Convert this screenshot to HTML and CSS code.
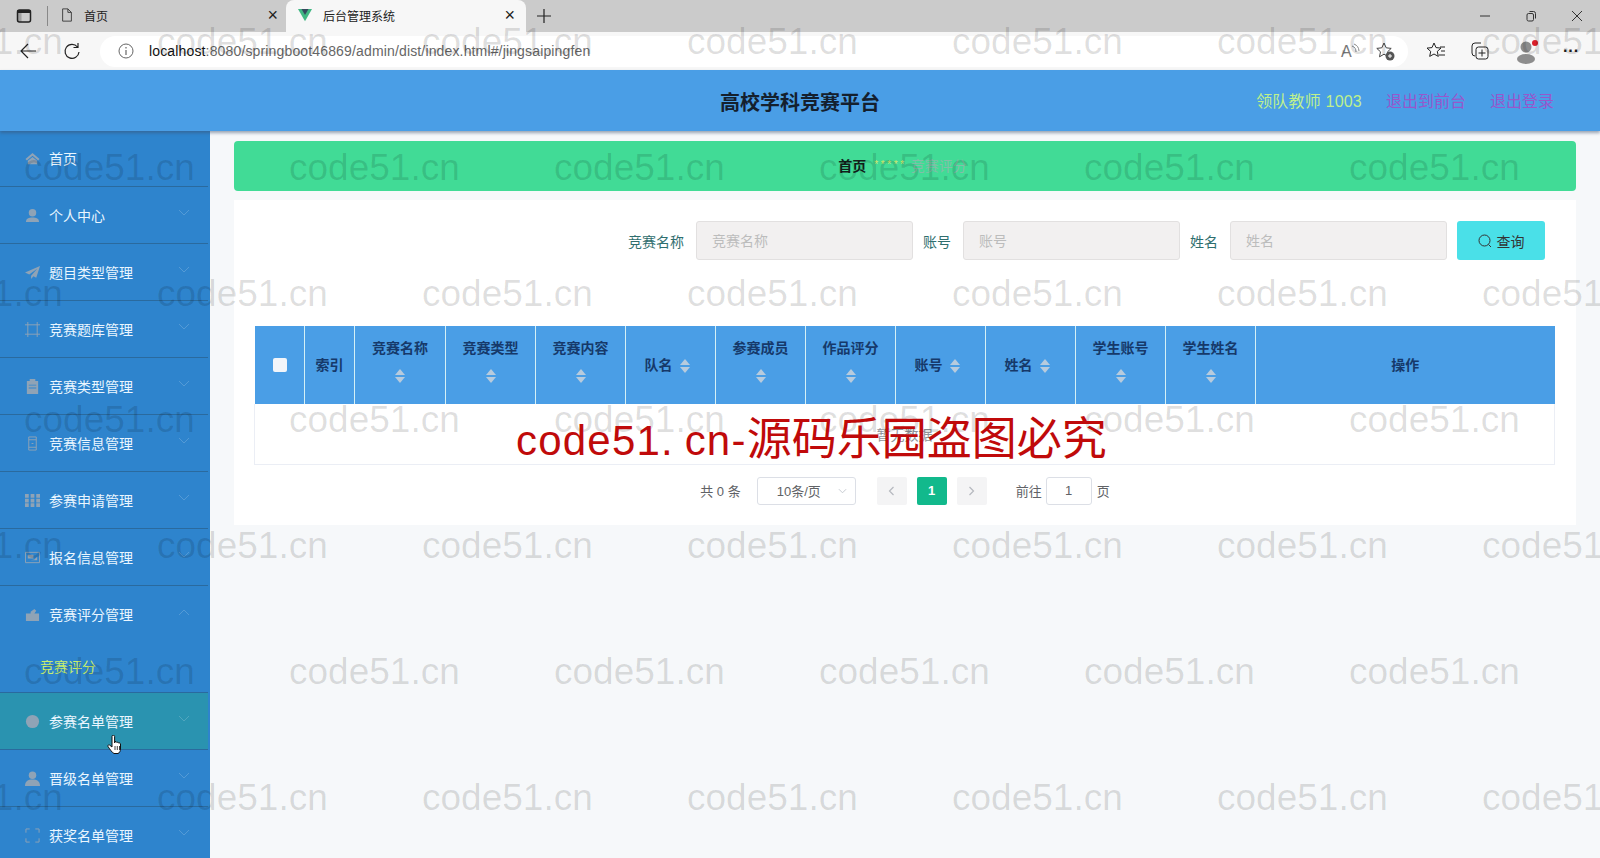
FILE: index.html
```html
<!DOCTYPE html>
<html lang="zh-CN">
  <head>
    <meta charset="UTF-8" />
    <title>后台管理系统</title>
    <link rel="stylesheet" href="styles.css">
  </head>
  <body>
    <div class="tabstrip">
      <svg class="tab-panel-icon" viewBox="0 0 16 16"><rect x="1.5" y="2" width="13" height="12" rx="2" fill="none" stroke="#222" stroke-width="1.5"/><rect x="1.5" y="2" width="13" height="3" fill="#222"/><rect x="1.5" y="2" width="4" height="12" fill="#222" opacity=".25"/></svg>
      <div class="tab-divider"></div>
      <div class="tab">
        <svg class="tab-icon" viewBox="0 0 14 16"><path d="M2 1h6l4 4v10H2z M8 1v4h4" fill="none" stroke="#333" stroke-width="1"/></svg>
        <span class="tab-title">首页</span>
        <span class="tab-close">×</span>
      </div>
      <div class="tab tab-active">
        <svg class="tab-icon" viewBox="0 0 16 14"><polygon points="0,0 16,0 8,14" fill="#41b883"/><polygon points="4,0 12,0 8,7" fill="#35495e"/></svg>
        <span class="tab-title">后台管理系统</span>
        <span class="tab-close">×</span>
      </div>
      <svg class="tab-plus" viewBox="0 0 14 14"><path d="M7 0v14M0 7h14" stroke="#222" stroke-width="1.2"/></svg>
      <div class="window-btns">
        <svg viewBox="0 0 12 12"><path d="M1 6h10" stroke="#333"/></svg>
        <svg viewBox="0 0 12 12"><rect x="2" y="3.5" width="6.5" height="7.5" rx="1.5" fill="none" stroke="#333"/><path d="M4.5 1.5h4a2 2 0 0 1 2 2v5" fill="none" stroke="#333"/></svg>
        <svg viewBox="0 0 12 12"><path d="M1 1l10 10M11 1L1 11" stroke="#333"/></svg>
      </div>
    </div>

    <div class="toolbar">
      <svg class="nav-icon" viewBox="0 0 18 18"><path d="M17 9H2M9 2L2 9l7 7" fill="none" stroke="#222" stroke-width="1.2"/></svg>
      <svg class="nav-icon" viewBox="0 0 18 18"><path d="M14.5 5A7 7 0 1 0 16 10M15 1v4.5h-4.5" fill="none" stroke="#222" stroke-width="1.2"/></svg>
      <div class="omnibox">
        <svg class="info-icon" viewBox="0 0 16 16"><circle cx="8" cy="8" r="7" fill="none" stroke="#666"/><path d="M8 7v5M8 4v1.5" stroke="#666" stroke-width="1.2"/></svg>
        <span class="url"><b>localhost</b>:8080/springboot46869/admin/dist/index.html#/jingsaipingfen</span>
        <svg class="omni-icon omni-read" viewBox="0 0 20 20"><text x="1" y="16" class="read-a">A</text><path d="M12 5a6 6 0 0 1 4 6M14 3a8 8 0 0 1 5 7" fill="none" stroke="#888"/></svg>
        <svg class="omni-icon" viewBox="0 0 20 20"><path d="M9 2l2.2 4.8 5 .6-3.7 3.4 1 5-4.5-2.6-4.5 2.6 1-5L1.8 7.400l5-.6z" fill="none" stroke="#444"/><circle cx="15" cy="15" r="4.500" fill="#555"/><path d="M15 13v4M13 15h4" stroke="#fff"/></svg>
      </div>
      <svg class="tool-icon tool-fav" viewBox="0 0 20 20"><path d="M8 2l2 4.600 5 .5-3.700 3.300 1 5L8 13l-4.300 2.400 1-5L1 7.100l5-.5z" fill="none" stroke="#222"/><path d="M14 6h5M15 10h4M13 14h6" stroke="#222"/></svg>
      <svg class="tool-icon tool-col" viewBox="0 0 20 20"><path d="M5 15a3 3 0 0 1-3-3V5a3 3 0 0 1 3-3h6" fill="none" stroke="#222"/><rect x="6" y="6" width="12" height="12" rx="2.500" fill="none" stroke="#222"/><path d="M12 8.500v7M8.500 12h7" stroke="#222"/></svg>
      <svg class="tool-avatar" viewBox="0 0 24 26"><circle cx="11" cy="9" r="5.500" fill="#8d8d8d"/><ellipse cx="11" cy="21" rx="9" ry="5" fill="#8d8d8d"/><circle cx="20" cy="5" r="3" fill="#d9202a"/></svg>
      <span class="tool-more">···</span>
    </div>

    <header class="topbar">
      <h1 class="site-title">高校学科竞赛平台</h1>
      <div class="top-links">
        <span class="top-user">领队教师 1003</span>
        <a class="top-link">退出到前台</a>
        <a class="top-link">退出登录</a>
      </div>
    </header>

    <div class="main">
      <aside class="sidebar">
        <div class="menu-item">
          <svg class="menu-icon" viewBox="0 0 16 16"><path d="M8 2L0.500 8.500 2 10l6-5 6 5 1.500-1.500zM3 10.500L8 6.500l5 4V14H3z"/></svg>
          <span>首页</span>
        </div>
        <div class="menu-item">
          <svg class="menu-icon" viewBox="0 0 16 16"><circle cx="8" cy="5" r="4"/><path d="M1 15c0-4 3-5 7-5s7 1 7 5z"/></svg>
          <span>个人中心</span>
          <svg class="chevron" viewBox="0 0 12 8"><path d="M1 1l5 5 5-5"/></svg>
        </div>
        <div class="menu-item">
          <svg class="menu-icon" viewBox="0 0 16 16"><path d="M16 1L0 8l4.500 2L13 4l-6.500 7.500V15l2.500-3 3 1.500z"/></svg>
          <span>题目类型管理</span>
          <svg class="chevron" viewBox="0 0 12 8"><path d="M1 1l5 5 5-5"/></svg>
        </div>
        <div class="menu-item">
          <svg class="menu-icon" viewBox="0 0 16 16"><path d="M3 0v16M13 0v16M0 3h16M0 13h16" fill="none" stroke="currentColor"/></svg>
          <span>竞赛题库管理</span>
          <svg class="chevron" viewBox="0 0 12 8"><path d="M1 1l5 5 5-5"/></svg>
        </div>
        <div class="menu-item">
          <svg class="menu-icon" viewBox="0 0 16 16"><path d="M2 2h3V0h6v2h3v14H2zM4 6v1h8V6zM4 9v1h8V9z" fill-rule="evenodd"/></svg>
          <span>竞赛类型管理</span>
          <svg class="chevron" viewBox="0 0 12 8"><path d="M1 1l5 5 5-5"/></svg>
        </div>
        <div class="menu-item">
          <svg class="menu-icon" viewBox="0 0 16 16"><path d="M4 1h8v14H4zM4 4h8M4 12h8M7 8h2" fill="none" stroke="currentColor"/></svg>
          <span>竞赛信息管理</span>
          <svg class="chevron" viewBox="0 0 12 8"><path d="M1 1l5 5 5-5"/></svg>
        </div>
        <div class="menu-item">
          <svg class="menu-icon" viewBox="0 0 16 16"><path d="M0 1h4v4H0zM6 1h4v4H6zM12 1h4v4h-4zM0 6h4v4H0zM6 6h4v4H6zM12 6h4v4h-4zM0 11h4v4H0zM6 11h4v4H6zM12 11h4v4h-4z"/></svg>
          <span>参赛申请管理</span>
          <svg class="chevron" viewBox="0 0 12 8"><path d="M1 1l5 5 5-5"/></svg>
        </div>
        <div class="menu-item">
          <svg class="menu-icon" viewBox="0 0 16 16"><path d="M.5 2.500h15v11H.5z" fill="none" stroke="currentColor"/><path d="M3 5h6v4H3zM10 10l3-3v4H6z"/></svg>
          <span>报名信息管理</span>
          <svg class="chevron" viewBox="0 0 12 8"><path d="M1 1l5 5 5-5"/></svg>
        </div>
        <div class="menu-item menu-open">
          <svg class="menu-icon" viewBox="0 0 16 16"><path d="M1 7h5V5l4-3 2 2-2 3h5v8H1z"/></svg>
          <span>竞赛评分管理</span>
          <svg class="chevron" viewBox="0 0 12 8"><path d="M1 7l5-5 5 5"/></svg>
        </div>
        <div class="submenu-item">竞赛评分</div>
        <div class="menu-item menu-hover">
          <svg class="menu-icon" viewBox="0 0 16 16"><circle cx="8" cy="8" r="7"/></svg>
          <span>参赛名单管理</span>
          <svg class="chevron" viewBox="0 0 12 8"><path d="M1 1l5 5 5-5"/></svg>
        </div>
        <div class="menu-item">
          <svg class="menu-icon" viewBox="0 0 16 16"><circle cx="8" cy="4.500" r="4"/><path d="M0 16c0-5 3-7 8-7s8 2 8 7z"/></svg>
          <span>晋级名单管理</span>
          <svg class="chevron" viewBox="0 0 12 8"><path d="M1 1l5 5 5-5"/></svg>
        </div>
        <div class="menu-item">
          <svg class="menu-icon" viewBox="0 0 16 16"><path d="M1 5V1h4M11 1h4v4M15 11v4h-4M5 15H1v-4" fill="none" stroke="currentColor"/></svg>
          <span>获奖名单管理</span>
          <svg class="chevron" viewBox="0 0 12 8"><path d="M1 1l5 5 5-5"/></svg>
        </div>
      </aside>

      <main class="content">
        <div class="breadcrumb">
          <span class="crumb-home">首页</span>
          <span class="crumb-sep">*****</span>
          <span class="crumb-current">竞赛评分</span>
        </div>

        <section class="panel">
          <form class="search-form">
            <label class="field"><span class="field-label">竞赛名称</span><input class="field-input" placeholder="竞赛名称" /></label>
            <label class="field"><span class="field-label">账号</span><input class="field-input" placeholder="账号" /></label>
            <label class="field"><span class="field-label">姓名</span><input class="field-input" placeholder="姓名" /></label>
            <button class="search-btn" type="button">
              <svg viewBox="0 0 14 14"><circle cx="6.500" cy="6.500" r="5.500" fill="none" stroke="#333"/><path d="M10.500 10.500l2.500 2.500" stroke="#333"/></svg>
              查询
            </button>
          </form>

          <table class="data-table">
            <colgroup>
              <col class="col-narrow" /><col class="col-narrow" />
              <col class="col-first" /><col class="col-wide" /><col class="col-wide" /><col class="col-wide" /><col class="col-wide" />
              <col class="col-wide" /><col class="col-wide" /><col class="col-wide" /><col class="col-wide" /><col class="col-wide" />
              <col />
            </colgroup>
            <thead>
              <tr>
                <th><span class="check"></span></th>
                <th>索引</th>
                <th>竞赛名称<span class="sort sort-block"></span></th>
                <th>竞赛类型<span class="sort sort-block"></span></th>
                <th>竞赛内容<span class="sort sort-block"></span></th>
                <th>队名<span class="sort"></span></th>
                <th>参赛成员<span class="sort sort-block"></span></th>
                <th>作品评分<span class="sort sort-block"></span></th>
                <th>账号<span class="sort"></span></th>
                <th>姓名<span class="sort"></span></th>
                <th>学生账号<span class="sort sort-block"></span></th>
                <th>学生姓名<span class="sort sort-block"></span></th>
                <th>操作</th>
              </tr>
            </thead>
            <tbody>
              <tr><td class="empty" colspan="13">暂无数据</td></tr>
            </tbody>
          </table>

          <div class="pager">
            <span class="pager-total">共 0 条</span>
            <div class="pager-size">10条/页<svg viewBox="0 0 10 6"><path d="M1 1l4 4 4-4" fill="none" stroke="#c0c4cc"/></svg></div>
            <span class="pager-btn"><svg viewBox="0 0 6 10"><path d="M5 1L1 5l4 4" fill="none" stroke="#b5b8be" stroke-width="1.200"/></svg></span>
            <span class="pager-num">1</span>
            <span class="pager-btn"><svg viewBox="0 0 6 10"><path d="M1 1l4 4-4 4" fill="none" stroke="#b5b8be" stroke-width="1.200"/></svg></span>
            <span class="pager-goto">前往</span>
            <span class="pager-input">1</span>
            <span class="pager-unit">页</span>
          </div>
        </section>
      </main>
    </div>

    <div class="watermarks">
      <div class="wm-row wm-odd"><span>code51.cn</span><span>code51.cn</span><span>code51.cn</span><span>code51.cn</span><span>code51.cn</span><span>code51.cn</span><span>code51.cn</span></div>
      <div class="wm-row wm-even"><span>code51.cn</span><span>code51.cn</span><span>code51.cn</span><span>code51.cn</span><span>code51.cn</span><span>code51.cn</span></div>
      <div class="wm-row wm-odd"><span>code51.cn</span><span>code51.cn</span><span>code51.cn</span><span>code51.cn</span><span>code51.cn</span><span>code51.cn</span><span>code51.cn</span></div>
      <div class="wm-row wm-even"><span>code51.cn</span><span>code51.cn</span><span>code51.cn</span><span>code51.cn</span><span>code51.cn</span><span>code51.cn</span></div>
      <div class="wm-row wm-odd"><span>code51.cn</span><span>code51.cn</span><span>code51.cn</span><span>code51.cn</span><span>code51.cn</span><span>code51.cn</span><span>code51.cn</span></div>
      <div class="wm-row wm-even"><span>code51.cn</span><span>code51.cn</span><span>code51.cn</span><span>code51.cn</span><span>code51.cn</span><span>code51.cn</span></div>
      <div class="wm-row wm-odd"><span>code51.cn</span><span>code51.cn</span><span>code51.cn</span><span>code51.cn</span><span>code51.cn</span><span>code51.cn</span><span>code51.cn</span></div>
    </div>

    <div class="red-mark"><span class="red-latin">code51<span class="red-dot">.</span>cn-</span>源码乐园盗图必究</div>

    <svg class="hand-cursor" viewBox="0 0 16 20"><path d="M5 1.500a1.300 1.300 0 0 1 2.600 0V8l.4-1.500c1 0 1.600.3 1.800 1 .8-.4 1.500-.2 1.800.5.800-.3 1.700 0 1.900 1V14c0 2-1 4-2.500 4.500H7C5.500 18 3 14.500 1 11.500c-.5-1 .5-2 1.500-1.500L5 12z" fill="#fff" stroke="#111"/><path d="M8 11v4M10.300 11v4M12.500 11v4" stroke="#111" stroke-width=".8"/></svg>
  </body>
</html>
```

FILE: styles.css
```css
* {
  margin: 0;
  padding: 0;
  box-sizing: border-box;
  font-family: "Liberation Sans", "Noto Sans CJK SC", sans-serif;
}
html,
body {
  height: 858px;
  overflow: hidden;
}
body {
  position: relative;
  background: #f6f8fa;
  color: #333;
}

/* browser chrome */
.tabstrip {
  display: flex;
  align-items: center;
  height: 32px;
  background: #cbcbcb;
}
.tab-panel-icon {
  width: 16px;
  height: 16px;
  margin-left: 16px;
}
.tab-divider {
  width: 1px;
  height: 20px;
  background: #888;
  margin: 0 9px 0 15px;
}
.tab {
  display: flex;
  align-items: center;
  width: 229px;
  height: 32px;
  padding: 0 0 2px 3px;
  font-size: 12px;
  color: #222;
}
.tab-icon {
  width: 14px;
  height: 14px;
}
.tab-title {
  margin-left: 10px;
  flex: 1;
}
.tab-close {
  font-size: 18px;
  margin-right: 8px;
  color: #222;
}
.tab-active {
  width: 240px;
  background: #f7f7f7;
  border-radius: 8px 8px 0 0;
  padding-left: 12px;
}
.tab-active .tab-title {
  margin-left: 11px;
}
.tab-active .tab-close {
  margin-right: 11px;
}
.tab-plus {
  width: 14px;
  height: 14px;
  margin-left: 11px;
}
.window-btns {
  display: flex;
  gap: 34px;
  margin-left: auto;
  margin-right: 17px;
}
.window-btns svg {
  width: 12px;
  height: 12px;
}
.toolbar {
  display: flex;
  align-items: center;
  height: 38px;
  background: #f7f7f7;
  padding-left: 19px;
}
.nav-icon {
  width: 18px;
  height: 18px;
  margin-right: 26px;
}
.omnibox {
  display: flex;
  align-items: center;
  width: 1308px;
  height: 31px;
  margin-left: -7px;
  background: #fff;
  border-radius: 16px;
  padding-left: 18px;
}
.info-icon {
  width: 16px;
  height: 16px;
}
.url {
  margin-left: 15px;
  font-size: 14px;
  letter-spacing: 0.15px;
  color: #666;
  flex: 1;
}
.url b {
  font-weight: 400;
  color: #111;
}
.omni-icon {
  width: 20px;
  height: 20px;
  margin-right: 13px;
}
.omni-read {
  margin-right: 15px;
}
.read-a {
  font-size: 16px;
  fill: #777;
}
.tool-icon {
  width: 20px;
  height: 20px;
}
.tool-fav {
  margin-left: 18px;
}
.tool-col {
  margin-left: 24px;
}
.tool-avatar {
  width: 24px;
  height: 26px;
  margin-left: 25px;
}
.tool-more {
  margin-left: 24px;
  font-size: 16px;
  font-weight: 700;
  color: #222;
}

/* header */
.topbar {
  position: relative;
  z-index: 2;
  display: flex;
  align-items: center;
  justify-content: flex-end;
  height: 61px;
  background: #4a9ee6;
  box-shadow: 0 2px 3px rgba(60, 80, 110, 0.5);
  padding-right: 46px;
}
.site-title {
  position: absolute;
  left: 0;
  right: 0;
  margin-top: 2px;
  text-align: center;
  font-size: 20px;
  font-weight: 700;
  color: #14202e;
}
.top-links {
  display: flex;
  align-items: center;
  margin-top: -2px;
  font-size: 16px;
}
.top-user {
  letter-spacing: 0.2px;
  color: #bff08c;
}
.top-link {
  color: #9757cc;
  margin-left: 24px;
}

/* sidebar */
.main {
  display: flex;
  height: 727px;
}
.sidebar {
  width: 210px;
  margin-top: -1px;
  background: #2e84cd;
  overflow: hidden;
  flex-shrink: 0;
}
.menu-item {
  display: flex;
  align-items: center;
  height: 57px;
  margin-right: 2px;
  padding: 0 18px 0 25px;
  border-bottom: 1px solid #2a6a9e;
  font-size: 14px;
  color: #eaf6ff;
}
.menu-icon {
  width: 15px;
  height: 15px;
  margin-right: 9px;
  fill: #8fa3b6;
  color: #8fa3b6;
  flex-shrink: 0;
}
.chevron {
  width: 12px;
  height: 8px;
  margin-left: auto;
  margin-top: -4px;
  fill: none;
  stroke: rgba(255, 255, 255, 0.18);
}
.menu-open {
  border-bottom: 0;
  height: 56px;
}
.menu-hover {
  background: #2a93b0;
}
.submenu-item {
  display: flex;
  align-items: center;
  height: 51px;
  margin-right: 2px;
  padding: 0 0 2px 40px;
  border-bottom: 1px solid #2a6a9e;
  font-size: 14px;
  color: #c8ee6e;
}

/* content */
.content {
  flex: 1;
  padding: 10px 24px 0;
}
.breadcrumb {
  display: flex;
  align-items: center;
  justify-content: center;
  height: 50px;
  padding-bottom: 2px;
  background: #41db96;
  border-radius: 4px;
  font-size: 14px;
}
.crumb-home {
  font-weight: 700;
  color: #12201a;
}
.crumb-sep {
  margin: -2px 4px 0 8px;
  font-size: 10px;
  letter-spacing: 2.6px;
  color: #d8e86c;
}
.crumb-current {
  margin-right: 5px;
  color: #82bfa8;
}
.panel {
  margin-top: 9px;
  padding: 21px 21px 20px;
  background: #fff;
}
.search-form {
  display: flex;
  justify-content: flex-end;
  padding-right: 10px;
}
.field {
  display: flex;
  align-items: center;
  gap: 12px;
  margin-right: 10px;
}
.field-label {
  font-size: 14px;
  color: #2f6e6e;
}
.field-input {
  width: 217px;
  height: 39px;
  padding: 0 15px;
  background: #f2f0f0;
  border: 1px solid #e2e0e0;
  border-radius: 3px;
  font-size: 14px;
  outline: 0;
}
.field-input::placeholder {
  color: #bcbcbc;
}
.search-btn {
  display: flex;
  align-items: center;
  justify-content: center;
  gap: 5px;
  width: 88px;
  height: 39px;
  background: #4ae0e8;
  border: 0;
  border-radius: 3px;
  font-size: 14px;
  color: #333;
}
.search-btn svg {
  width: 14px;
  height: 14px;
}

/* table */
.data-table {
  width: 1301px;
  margin: 66px 0 0 -1px;
  table-layout: fixed;
  border-collapse: collapse;
}
.col-narrow {
  width: 50px;
}
.col-first {
  width: 91px;
}
.col-wide {
  width: 90px;
}
.data-table th {
  height: 78px;
  padding-bottom: 2px;
  background: #4a9ee6;
  border-right: 1px solid #d4f0f6;
  font-size: 14px;
  font-weight: 700;
  color: #16396a;
  vertical-align: middle;
}
.data-table th:last-child {
  border-right: 0;
}
.check {
  display: inline-block;
  width: 14px;
  height: 14px;
  margin-left: 1px;
  background: #f2f5fa;
  border-radius: 2px;
  vertical-align: middle;
}
.sort {
  display: inline-block;
  position: relative;
  width: 10px;
  height: 14px;
  margin: 0 7px 0 7px;
  vertical-align: middle;
}
.sort::before,
.sort::after {
  content: "";
  position: absolute;
  left: 0;
  border-left: 5px solid transparent;
  border-right: 5px solid transparent;
}
.sort::before {
  top: 0;
  border-bottom: 6px solid #b8cbdd;
}
.sort::after {
  bottom: 0;
  border-top: 6px solid #b8cbdd;
}
.sort-block {
  display: block;
  margin: 12px auto 8px;
}
.empty {
  height: 60px;
  text-align: center;
  font-size: 14px;
  color: #909399;
  border: 1px solid #ebeef5;
  border-top: 0;
}

/* pagination */
.pager {
  display: flex;
  align-items: center;
  justify-content: center;
  height: 28px;
  margin-top: 12px;
  font-size: 13px;
  color: #606266;
}
.pager-size {
  display: flex;
  align-items: center;
  justify-content: space-between;
  width: 99px;
  height: 28px;
  margin: 0 21px 0 16px;
  padding: 0 8px 0 19px;
  border: 1px solid #dcdfe6;
  border-radius: 3px;
}
.pager-size svg {
  width: 9px;
  height: 6px;
}
.pager-btn {
  display: flex;
  align-items: center;
  justify-content: center;
  width: 30px;
  height: 28px;
  background: #f4f4f5;
  border-radius: 2px;
}
.pager-btn svg {
  width: 7px;
  height: 10px;
}
.pager-num {
  display: flex;
  align-items: center;
  justify-content: center;
  width: 30px;
  height: 28px;
  margin: 0 10px;
  background: #12b98c;
  border-radius: 2px;
  font-weight: 700;
  color: #fff;
}
.pager-goto {
  margin-left: 29px;
}
.pager-input {
  display: flex;
  align-items: center;
  justify-content: center;
  width: 46px;
  height: 28px;
  margin: 0 5px 0 4px;
  border: 1px solid #dcdfe6;
  border-radius: 3px;
}

/* things laid over the whole screenshot */
.watermarks {
  position: absolute;
  inset: 0;
  overflow: hidden;
  pointer-events: none;
  z-index: 5;
}
.wm-row {
  display: flex;
  height: 126px;
  font-size: 37px;
  line-height: 84px;
  color: rgba(0, 0, 0, 0.13);
}
.wm-row span {
  flex: 0 0 265px;
}
.wm-odd {
  margin-left: -108px;
}
.wm-even {
  margin-left: 24px;
}
.red-mark {
  position: absolute;
  left: 516px;
  top: 411px;
  z-index: 6;
  font-size: 45px;
  line-height: 58px;
  color: #c00a0a;
  white-space: nowrap;
}
.red-latin {
  font-size: 42px;
  letter-spacing: 1.2px;
}
.red-dot {
  letter-spacing: 12px;
}
.hand-cursor {
  position: absolute;
  left: 107px;
  top: 735px;
  width: 16px;
  height: 20px;
  z-index: 6;
}
```
